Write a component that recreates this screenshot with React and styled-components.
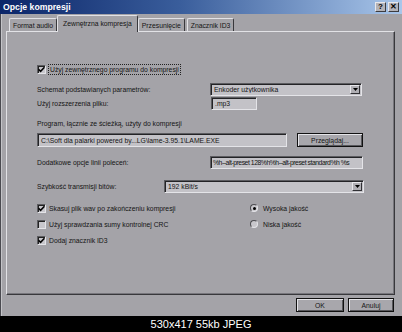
import React from 'react'
import styled, { createGlobalStyle } from 'styled-components'

const GlobalStyle = createGlobalStyle`
  html, body {
    margin: 0;
    padding: 0;
    background: #000;
  }
  body {
    font-family: "Liberation Sans", Arial, sans-serif;
  }
`

const Page = styled.div`
  width: 402px;
  height: 332px;
  display: flex;
  flex-direction: column;
  overflow: hidden;
`

const Window = styled.div`
  height: 316px;
  background: #a4a3a8;
  display: flex;
  flex-direction: column;
  box-shadow: inset 1px 0 #4a4a50, inset 2px 0 #c4c4c8;
  font-size: 6.8px;
  color: #141414;
`

const TitleBar = styled.div`
  height: 14px;
  flex: none;
  padding: 0 3px 0 3px;
  display: flex;
  align-items: center;
  justify-content: space-between;
  background: linear-gradient(90deg, #0b2568 0%, #3a5e9c 45%, #a9c6ea 100%);
`

const Title = styled.span`
  color: #fff;
  font-weight: bold;
  font-size: 8.7px;
`

const TitleButtons = styled.div`
  display: flex;
  gap: 2px;
`

const TitleButton = styled.div`
  width: 11px;
  height: 10px;
  box-sizing: border-box;
  background: #b4b3b8;
  border: 1px solid;
  border-color: #e8e8ec #3c3c40 #3c3c40 #e8e8ec;
  display: flex;
  align-items: center;
  justify-content: center;
  font-weight: bold;
  font-size: 8px;
  color: #000;
  line-height: 1;
`

const TabStrip = styled.div`
  height: 17px;
  flex: none;
  padding-left: 8px;
  display: flex;
  align-items: flex-end;
  position: relative;
  z-index: 2;
`

const Tab = styled.div`
  height: ${p => (p.$active ? 17 : 13)}px;
  box-sizing: border-box;
  padding: 0 ${p => (p.$active ? 5 : 3)}px;
  margin: 0 ${p => (p.$active ? -1 : 1)}px ${p => (p.$active ? -1 : 0)}px;
  display: flex;
  align-items: center;
  background: #a4a3a8;
  border-top: 1px solid #e2e2e6;
  border-left: 1px solid #e2e2e6;
  border-right: 1px solid #38383c;
  border-radius: 2px 2px 0 0;
  white-space: nowrap;
  padding-bottom: ${p => (p.$active ? 2 : 0)}px;
`

const Panel = styled.div`
  margin-left: 6px;
  width: 389px;
  height: 264px;
  box-sizing: border-box;
  border: 1px solid;
  border-color: #e2e2e6 #38383c #38383c #e2e2e6;
  box-shadow: inset -1px -1px #77767c;
  padding: 31px 0 0 30px;
  display: flex;
  flex-direction: column;
`

const Row = styled.div`
  height: ${p => p.$h || 13}px;
  margin-top: ${p => p.$mt || 0}px;
  display: flex;
  align-items: center;
  flex: none;
`

const FieldLabel = styled.span`
  width: ${p => p.$w}px;
  flex: none;
  white-space: nowrap;
`

const Sunken = styled.div`
  width: ${p => p.$w}px;
  height: ${p => p.$h || 13}px;
  box-sizing: border-box;
  background: #c3c2c7;
  border: 1px solid;
  border-color: #5c5c60 #e4e4e8 #e4e4e8 #5c5c60;
  box-shadow: inset 1px 1px #232326;
  display: flex;
  align-items: center;
  padding-left: ${p => (p.$tight ? 2 : 3)}px;
  letter-spacing: ${p => (p.$tight ? -0.45 : 0)}px;
  overflow: hidden;
  white-space: nowrap;
  flex: none;
`

const Value = styled.span`
  flex: 1;
  overflow: hidden;
  white-space: nowrap;
`

const DropButton = styled.div`
  width: 10px;
  height: 9px;
  margin-right: 1px;
  box-sizing: border-box;
  background: #b0afb4;
  border: 1px solid;
  border-color: #e8e8ec #303034 #303034 #e8e8ec;
  display: flex;
  align-items: center;
  justify-content: center;
  flex: none;
`

const PushButton = styled.div`
  width: ${p => p.$w}px;
  height: 14px;
  box-sizing: border-box;
  background: #a8a7ac;
  border: 1px solid #111;
  box-shadow: inset 1px 1px #e4e4e8, inset -1px -1px #58585c;
  display: flex;
  align-items: center;
  justify-content: center;
  margin-left: ${p => p.$ml || 0}px;
  flex: none;
`

const Options = styled.div`
  margin-top: 9px;
  display: grid;
  grid-template-columns: 213px auto;
  grid-auto-rows: 12px;
  row-gap: 4px;
`

const Check = styled.div`
  display: flex;
  align-items: center;
  gap: 3px;
`

const Box = styled.div`
  width: 9px;
  height: 9px;
  box-sizing: border-box;
  background: #c8c7cc;
  border: 1px solid;
  border-color: #5c5c60 #e4e4e8 #e4e4e8 #5c5c60;
  box-shadow: inset 1px 1px #222;
  display: flex;
  align-items: center;
  justify-content: center;
  flex: none;
`

const Radio = styled.div`
  width: 8px;
  height: 8px;
  box-sizing: border-box;
  border-radius: 50%;
  background: #c8c7cc;
  border: 1px solid;
  border-color: #4c4c50 #e4e4e8 #e4e4e8 #4c4c50;
  display: flex;
  align-items: center;
  justify-content: center;
  flex: none;
  margin-right: 2px;
  &::after {
    content: '';
    display: ${p => (p.$on ? 'block' : 'none')};
    width: 3px;
    height: 3px;
    border-radius: 50%;
    background: #000;
  }
`

const Focus = styled.span`
  outline: 1px dotted #222;
  outline-offset: 0;
  padding: 0 1px;
  line-height: 9px;
`

const Footer = styled.div`
  margin-top: 3px;
  padding-right: 8px;
  display: flex;
  justify-content: flex-end;
  gap: 4px;
`

const Caption = styled.div`
  height: 16px;
  background: #000;
  color: #fff;
  font-family: "Liberation Sans", Arial, sans-serif;
  font-size: 11px;
  line-height: 16px;
  text-align: center;
`

const Tick = () => (
  <svg width="7" height="7" viewBox="0 0 7 7">
    <path d="M0.5 3.2 L2.6 5.3 L6.5 1.2" fill="none" stroke="#000" strokeWidth="1.6" />
  </svg>
)

const Arrow = () => (
  <svg width="5" height="3" viewBox="0 0 5 3">
    <path d="M0 0 H5 L2.5 3 Z" fill="#000" />
  </svg>
)

const CheckItem = ({ on, children }) => (
  <Check>
    <Box>{on && <Tick />}</Box>
    <span>{children}</span>
  </Check>
)

const RadioItem = ({ on, children }) => (
  <Check>
    <Radio $on={on} />
    <span>{children}</span>
  </Check>
)

const tabs = ['Format audio', 'Zewnętrzna kompresja', 'Przesunięcie', 'Znacznik ID3']

const App = () => {
  return (
    <Page>
      <GlobalStyle />
      <Window>
        <TitleBar>
          <Title>Opcje kompresji</Title>
          <TitleButtons>
            <TitleButton>?</TitleButton>
            <TitleButton>✕</TitleButton>
          </TitleButtons>
        </TitleBar>
        <TabStrip>
          {tabs.map((t, i) => (
            <Tab key={t} $active={i === 1}>{t}</Tab>
          ))}
        </TabStrip>
        <Panel>
          <Row $h={12}>
            <Check>
              <Box><Tick /></Box>
              <Focus>Użyj zewnętrznego programu do kompresji</Focus>
            </Check>
          </Row>
          <Row $mt={8}>
            <FieldLabel $w={173}>Schemat podstawianych parametrów:</FieldLabel>
            <Sunken $w={152}>
              <Value>Enkoder użytkownika</Value>
              <DropButton><Arrow /></DropButton>
            </Sunken>
          </Row>
          <Row $mt={1}>
            <FieldLabel $w={174}>Użyj rozszerzenia pliku:</FieldLabel>
            <Sunken $w={46}>.mp3</Sunken>
          </Row>
          <Row $mt={7} $h={12}>
            <FieldLabel $w={200}>Program, łącznie ze ścieżką, użyty do kompresji</FieldLabel>
          </Row>
          <Row $mt={4} $h={14}>
            <Sunken $w={250} $h={14}>C:\Soft dla palarki powered by...LG\lame-3.95.1\LAME.EXE</Sunken>
            <PushButton $w={66} $ml={10}>Przeglądaj...</PushButton>
          </Row>
          <Row $mt={9}>
            <FieldLabel $w={173}>Dodatkowe opcje linii poleceń:</FieldLabel>
            <Sunken $w={153} $tight>%h--alt-preset 128%h%h--alt-preset standard%h %s</Sunken>
          </Row>
          <Row $mt={11}>
            <FieldLabel $w={127}>Szybkość transmisji bitów:</FieldLabel>
            <Sunken $w={200}>
              <Value>192 kBit/s</Value>
              <DropButton><Arrow /></DropButton>
            </Sunken>
          </Row>
          <Options>
            <CheckItem on>Skasuj plik wav po zakończeniu kompresji</CheckItem>
            <RadioItem on>Wysoka jakość</RadioItem>
            <CheckItem>Użyj sprawdzania sumy kontrolnej CRC</CheckItem>
            <RadioItem>Niska jakość</RadioItem>
            <CheckItem on>Dodaj znacznik ID3</CheckItem>
          </Options>
        </Panel>
        <Footer>
          <PushButton $w={48}>OK</PushButton>
          <PushButton $w={46}>Anuluj</PushButton>
        </Footer>
      </Window>
      <Caption>530x417 55kb JPEG</Caption>
    </Page>
  )
}

export default App
